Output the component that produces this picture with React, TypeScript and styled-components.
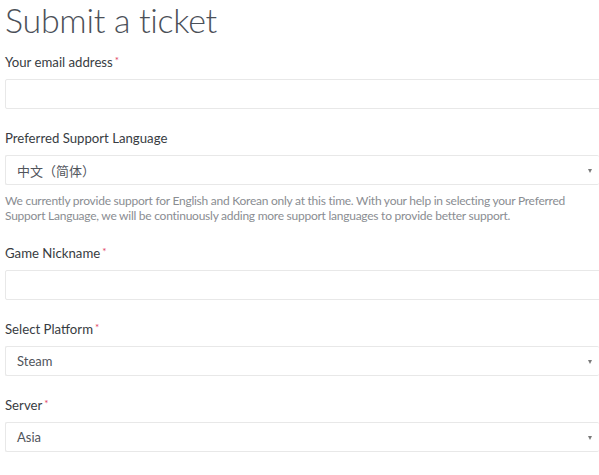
import React from 'react';
import styled, { createGlobalStyle } from 'styled-components';

const GlobalStyle = createGlobalStyle`
html, body {
    margin: 0;
    padding: 0;
    background: #ffffff;
    overflow: hidden;
}
body {
    font-family: Lato, "Noto Sans", "Noto Sans CJK SC", sans-serif;
    color: #4a4e55;
}
`;

const Page = styled.div`
padding: 1px 0 0 5px;
width: 620px;
`;

const Title = styled.h1`
margin: 0 0 14px 0;
font-size: 34px;
line-height: 37px;
font-weight: 300;
color: #4b5058;
letter-spacing: -0.3px;
`;

const Field = styled.div`
margin-bottom: 19px;
`;

const Label = styled.label`
display: block;
font-size: 13.2px;
line-height: 20px;
color: #383c42;
margin-bottom: 7px;
`;

const Required = styled.span`
color: #e0415d;
font-size: 10px;
line-height: 0;
margin-left: 2px;
position: relative;
top: -3px;
`;

const Input = styled.div`
box-sizing: border-box;
height: 30px;
width: 100%;
border: 1px solid #e8e8e8;
border-radius: 2px;
background: #fff;
`;

const Select = styled(Input)`
display: flex;
align-items: center;
justify-content: space-between;
padding: 0 7px 0 11px;
font-size: 13px;
color: #50545b;
width: 594px;
border-right: none;
`;

const Arrow = styled.span`
width: 0;
height: 0;
border-left: 2.5px solid transparent;
border-right: 2.5px solid transparent;
border-top: 4px solid #7a7a7a;
margin-top: 1px;
`;

const Help = styled.p`
margin: 8px 0 20px 0;
font-size: 12px;
line-height: 15px;
letter-spacing: -0.25px;
color: #8a8d92;
width: 590px;
`;

function App() {
    return (
        <Page>
            <GlobalStyle />
            <Title>Submit a ticket</Title>
            <Field>
                <Label>Your email address<Required>*</Required></Label>
                <Input />
            </Field>
            <Field>
                <Label>Preferred Support Language</Label>
                <Select>中文（简体）<Arrow /></Select>
                <Help>
                    We currently provide support for English and Korean only at this time. With your help in selecting your Preferred
                    Support Language, we will be continuously adding more support languages to provide better support.
                </Help>
            </Field>
            <Field>
                <Label>Game Nickname<Required>*</Required></Label>
                <Input />
            </Field>
            <Field>
                <Label>Select Platform<Required>*</Required></Label>
                <Select>Steam<Arrow /></Select>
            </Field>
            <Field>
                <Label>Server<Required>*</Required></Label>
                <Select>Asia<Arrow /></Select>
            </Field>
        </Page>
    );
}

export default App;
